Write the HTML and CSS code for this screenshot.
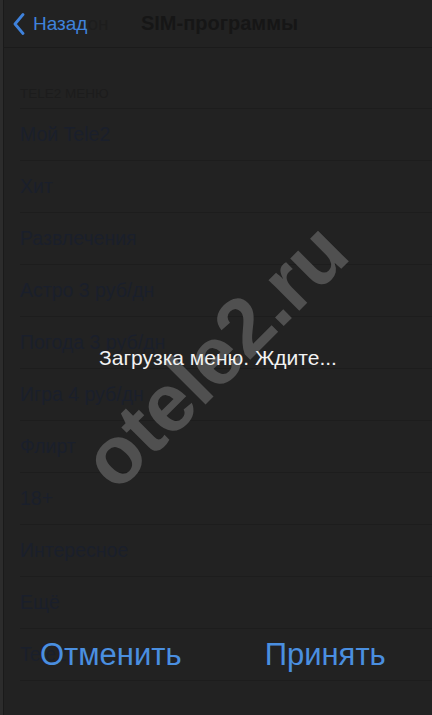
FILE: index.html
```html
<!DOCTYPE html>
<html lang="ru">
<head>
<meta charset="utf-8">
<title>SIM-программы</title>
<link rel="stylesheet" href="styles.css">
</head>
<body>
<div class="screen">
  <header class="nav">
    <div class="nav-left">
      <svg class="chevron" width="12" height="22" viewBox="0 0 12 22" aria-hidden="true">
        <path d="M10 1.5 L2 11 L10 20.5" fill="none" stroke="currentColor" stroke-width="2.8" stroke-linecap="round" stroke-linejoin="round"/>
      </svg>
      <span class="back">Назад</span><span class="ghost">он</span>
    </div>
    <div class="nav-title">SIM-программы</div>
    <div class="nav-right"></div>
  </header>
  <div class="section-head">TELE2 МЕНЮ</div>
  <ul class="list">
    <li class="row">Мой Tele2</li>
    <li class="row">Хит</li>
    <li class="row">Развлечения</li>
    <li class="row">Астро 3 руб/дн</li>
    <li class="row">Погода 3 руб/дн</li>
    <li class="row">Игра 4 руб/дн</li>
    <li class="row">Флирт</li>
    <li class="row">18+</li>
    <li class="row">Интересное</li>
    <li class="row">Ещё</li>
    <li class="row">Tele2</li>
  </ul>
</div>
<div class="overlay">
  <div class="watermark"><span>otele2.ru</span></div>
  <div class="message">Загрузка меню. Ждите...</div>
  <div class="actions">
    <span class="action">Отменить</span>
    <span class="action">Принять</span>
  </div>
</div>
</body>
</html>
```

FILE: styles.css
```css
html, body {
  margin: 0;
  padding: 0;
}
body {
  width: 432px;
  height: 715px;
  overflow: hidden;
  background: #222222;
  font-family: "Liberation Sans", Arial, sans-serif;
  position: relative;
}
.screen {
  height: 715px;
  border-left: 3px solid #2c2c2c;
  box-shadow: inset 1px 0 0 #1a1a1a;
  box-sizing: border-box;
}
.nav {
  height: 47px;
  border-bottom: 1px solid #1b1b1b;
  display: grid;
  grid-template-columns: 1fr auto 1fr;
  align-items: center;
}
.nav-left {
  display: flex;
  align-items: center;
  padding-left: 10px;
  color: #3f82dc;
}
.chevron {
  display: block;
  margin-right: 8px;
}
.back {
  font-size: 19px;
  color: #3f82dc;
}
.ghost {
  font-size: 19px;
  color: #1d1d1d;
}
.nav-title {
  font-size: 20px;
  font-weight: 600;
  color: #161616;
  padding-left: 4px;
}
.section-head {
  height: 61px;
  box-sizing: border-box;
  margin-left: 17px;
  padding-top: 38px;
  font-size: 13.5px;
  color: #1c1c1c;
  border-bottom: 1px solid #1d1d1d;
}
.list {
  list-style: none;
  margin: 0;
  padding: 0;
}
.row {
  height: 51px;
  margin-left: 17px;
  border-bottom: 1px solid #1d1d1d;
  display: flex;
  align-items: center;
  font-size: 19.5px;
  color: #1a1f2b;
}
.overlay {
  position: absolute;
  inset: 0;
  display: flex;
  flex-direction: column;
  align-items: stretch;
}
.watermark {
  position: absolute;
  inset: 0;
  display: flex;
  align-items: center;
  justify-content: center;
}
.watermark span {
  display: block;
  font-size: 82px;
  font-weight: 700;
  line-height: 1;
  letter-spacing: -1px;
  color: #505050;
  transform: translate(-2px, -2px) rotate(-45deg);
  white-space: nowrap;
}
.message {
  position: relative;
  margin-top: 345px;
  text-align: center;
  padding-left: 4px;
  font-size: 21px;
  line-height: 26px;
  color: #f2f2f2;
}
.actions {
  position: relative;
  margin-top: auto;
  padding: 0 0 42px 40px;
  display: flex;
  gap: 83px;
}
.action {
  font-size: 31px;
  line-height: 36px;
  color: #4a8fe0;
}
```
